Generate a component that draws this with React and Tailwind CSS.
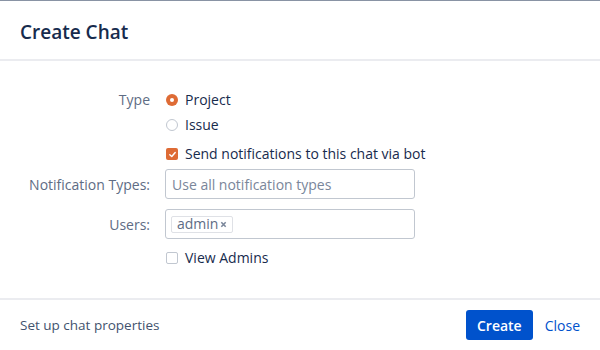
export default function App() {
  return (
    <div className="w-[600px] h-[350px] bg-white border-t border-[#8993a4] flex flex-col font-['Open_Sans',sans-serif] text-[14px] text-[#172b4d]">
      {/* Header */}
      <div className="h-[60px] flex items-center px-5 pt-[3px] border-b-2 border-[#ebecf0]">
        <h2 className="text-[19px] font-semibold leading-6 text-[#172b4d]">Create Chat</h2>
      </div>

      {/* Body */}
      <div className="flex-1 pt-[29px] flex flex-col">
        <div className="flex">
          <div className="w-[150px] text-right text-[#5e6c84] leading-5">Type</div>
          <div className="ml-[16px] flex flex-col gap-[5px]">
            <label className="flex items-center gap-[7px] leading-5">
              <span className="w-[12px] h-[12px] rounded-full bg-[#de6b35] flex items-center justify-center">
                <span className="w-[4px] h-[4px] rounded-full bg-white" />
              </span>
              Project
            </label>
            <label className="flex items-center gap-[7px] leading-5">
              <span className="w-[12px] h-[12px] rounded-full border border-[#c1c7d0] bg-white" />
              Issue
            </label>
          </div>
        </div>

        <div className="flex mt-[9px]">
          <div className="w-[150px]" />
          <label className="ml-[16px] flex items-center gap-[7px] leading-5">
            <span className="w-[12px] h-[12px] rounded-[2px] bg-[#de6b35] flex items-center justify-center">
              <svg width="9" height="9" viewBox="0 0 10 10" fill="none">
                <path d="M2 5.2 L4.2 7.3 L8 2.8" stroke="white" strokeWidth="1.6" strokeLinecap="round" strokeLinejoin="round" />
              </svg>
            </span>
            Send notifications to this chat via bot
          </label>
        </div>

        <div className="flex items-center mt-[5px]">
          <div className="w-[150px] text-right text-[#5e6c84]">Notification Types:</div>
          <div className="ml-[15px] w-[250px] h-[30px] border border-[#c1c7d0] rounded-[3px] flex items-center px-[6px] text-[#7a869a]">
            Use all notification types
          </div>
        </div>

        <div className="flex items-center mt-[10px]">
          <div className="w-[150px] text-right text-[#5e6c84]">Users:</div>
          <div className="ml-[15px] w-[250px] h-[30px] border border-[#c1c7d0] rounded-[3px] flex items-center px-[5px]">
            <span className="h-[17px] px-[5px] border border-[#dfe1e6] rounded-[2px] flex items-center text-[#5e6c84] leading-none">
              admin
              <svg width="7" height="7" viewBox="0 0 8 8" className="ml-[2px]">
                <path d="M1.5 1.5 L6.5 6.5 M6.5 1.5 L1.5 6.5" stroke="#7a869a" strokeWidth="1.8" />
              </svg>
            </span>
          </div>
        </div>

        <div className="flex mt-[9px]">
          <div className="w-[150px]" />
          <label className="ml-[16px] flex items-center gap-[7px] leading-5">
            <span className="w-[12px] h-[12px] rounded-[2px] border border-[#c1c7d0] bg-white" />
            View Admins
          </label>
        </div>
      </div>

      {/* Footer */}
      <div className="h-[52px] border-t-2 border-[#ebecf0] flex items-center justify-between pl-5 pr-[20px]">
        <span className="text-[#42526e] text-[13.5px]">Set up chat properties</span>
        <div className="flex items-center gap-[12px]">
          <button className="h-[30px] px-[11px] rounded-[3px] bg-[#0052cc] text-white font-semibold">Create</button>
          <button className="text-[#0052cc]">Close</button>
        </div>
      </div>
    </div>
  );
}
